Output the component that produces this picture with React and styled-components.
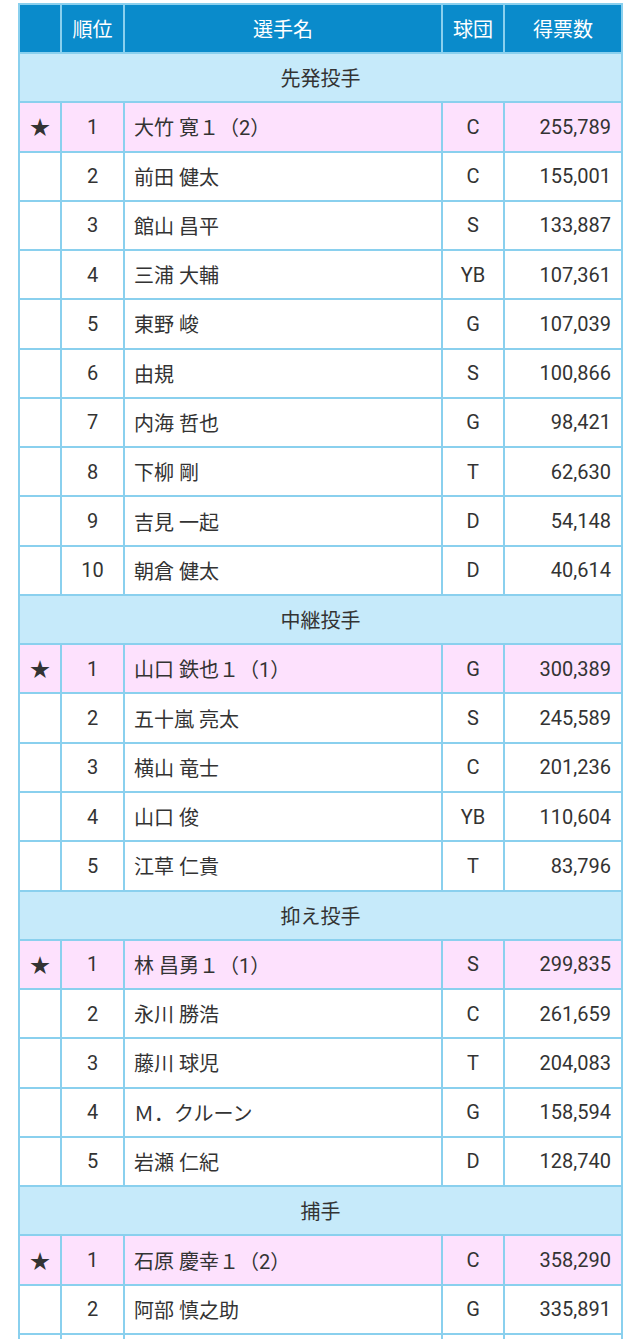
import React from "react";
import styled, { createGlobalStyle } from "styled-components";

const GlobalStyle = createGlobalStyle`
  body {
    margin: 0;
    background: #ffffff;
    font-family: Roboto, "Noto Sans CJK JP", "Noto Sans", sans-serif;
  }
`;

const Page = styled.div`
  padding: 3px 0 0 18px;
`;

const Table = styled.table`
  width: 603px;
  border-collapse: collapse;
  table-layout: fixed;
  font-size: 20px;
  color: #333333;
  border: 2px solid #8ad0ee;
`;

const HeadCell = styled.th`
  height: 47px;
  padding: 0;
  background: #0a8bcb;
  color: #ffffff;
  font-weight: 400;
  text-align: center;
  border: 2px solid #8ad0ee;
`;

const SectionCell = styled.td`
  height: 47.28px;
  padding: 0;
  background: #c6eafa;
  text-align: center;
  border: 2px solid #8ad0ee;
`;

const Row = styled.tr`
  background: ${(p) => (p.$top ? "#fde1fd" : "#ffffff")};
`;

const Cell = styled.td`
  height: 47.28px;
  padding: ${(p) => (p.$align === "left" ? "0 0 0 9px" : p.$align === "right" ? "0 10px 0 0" : "0")};
  text-align: ${(p) => p.$align || "center"};
  border: 2px solid #8ad0ee;
  white-space: nowrap;
`;

const sections = [
  {
    title: "先発投手",
    rows: [
      [1, "大竹 寛１（2）", "C", "255,789"],
      [2, "前田 健太", "C", "155,001"],
      [3, "館山 昌平", "S", "133,887"],
      [4, "三浦 大輔", "YB", "107,361"],
      [5, "東野 峻", "G", "107,039"],
      [6, "由規", "S", "100,866"],
      [7, "内海 哲也", "G", "98,421"],
      [8, "下柳 剛", "T", "62,630"],
      [9, "吉見 一起", "D", "54,148"],
      [10, "朝倉 健太", "D", "40,614"],
    ],
  },
  {
    title: "中継投手",
    rows: [
      [1, "山口 鉄也１（1）", "G", "300,389"],
      [2, "五十嵐 亮太", "S", "245,589"],
      [3, "横山 竜士", "C", "201,236"],
      [4, "山口 俊", "YB", "110,604"],
      [5, "江草 仁貴", "T", "83,796"],
    ],
  },
  {
    title: "抑え投手",
    rows: [
      [1, "林 昌勇１（1）", "S", "299,835"],
      [2, "永川 勝浩", "C", "261,659"],
      [3, "藤川 球児", "T", "204,083"],
      [4, "Ｍ．クルーン", "G", "158,594"],
      [5, "岩瀬 仁紀", "D", "128,740"],
    ],
  },
  {
    title: "捕手",
    rows: [
      [1, "石原 慶幸１（2）", "C", "358,290"],
      [2, "阿部 慎之助", "G", "335,891"],
      [3, "矢野 輝弘", "T", "180,224"],
    ],
  },
];

export default function App() {
  return (
    <Page>
      <GlobalStyle />
      <Table>
        <colgroup>
          <col style={{ width: 42 }} />
          <col style={{ width: 63 }} />
          <col style={{ width: 318 }} />
          <col style={{ width: 62 }} />
          <col style={{ width: 118 }} />
        </colgroup>
        <thead>
          <tr>
            <HeadCell></HeadCell>
            <HeadCell>順位</HeadCell>
            <HeadCell>選手名</HeadCell>
            <HeadCell>球団</HeadCell>
            <HeadCell>得票数</HeadCell>
          </tr>
        </thead>
        <tbody>
          {sections.map((s) => (
            <React.Fragment key={s.title}>
              <tr>
                <SectionCell colSpan={5}>{s.title}</SectionCell>
              </tr>
              {s.rows.map(([rank, name, team, votes]) => (
                <Row key={name} $top={rank === 1}>
                  <Cell>{rank === 1 ? "★" : ""}</Cell>
                  <Cell>{rank}</Cell>
                  <Cell $align="left">{name}</Cell>
                  <Cell>{team}</Cell>
                  <Cell $align="right">{votes}</Cell>
                </Row>
              ))}
            </React.Fragment>
          ))}
        </tbody>
      </Table>
    </Page>
  );
}
